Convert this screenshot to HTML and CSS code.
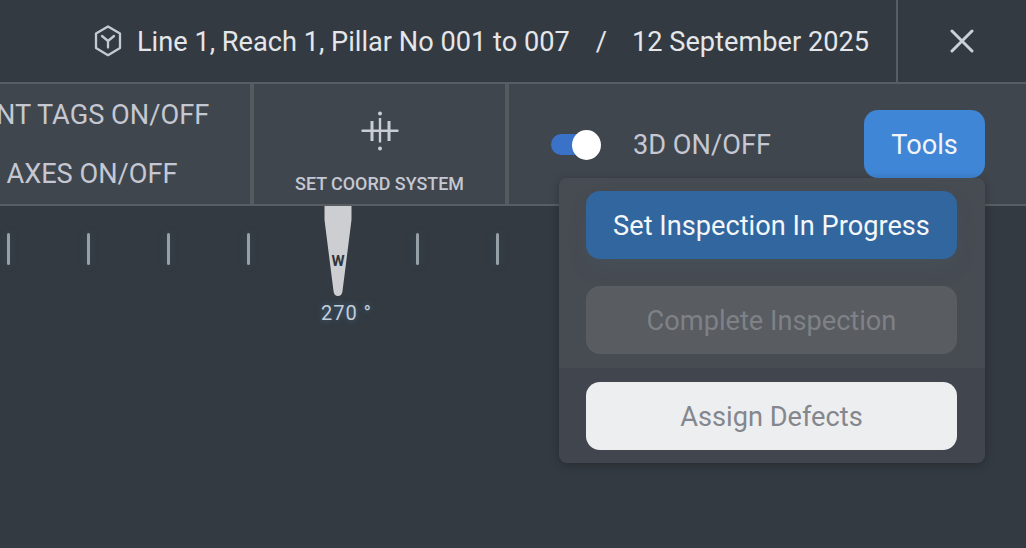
FILE: index.html
```html
<!DOCTYPE html>
<html>
<head>
  <title>Inspection Viewer</title>
  <link rel="stylesheet" href="styles.css">
</head>
<body>

  <div class="header">
    <svg class="cube" width="28" height="32" viewBox="0 0 28 32" fill="none" stroke="#c5c9d2" stroke-width="2.3" stroke-linejoin="round">
      <path d="M14 1.5 L26 8.6 V23 L14 30.2 L2 23 V8.6 Z"/>
      <path d="M8 11 L14 16 L20 11 M14 16 V22.5" stroke-linecap="round"/>
    </svg>
    <span class="title">Line 1, Reach 1, Pillar No 001 to 007</span>
    <span class="slash">/</span>
    <span class="title">12 September 2025</span>
    <div class="close">
      <svg width="24" height="24" viewBox="0 0 24 24" stroke="#ccd0d8" stroke-width="3" stroke-linecap="round">
        <path d="M2 2 L22 22 M22 2 L2 22"/>
      </svg>
    </div>
  </div>

  <div class="toolbar">
    <div class="cell cell-toggles">
      <div class="toggle-label tags-label">POINT TAGS ON/OFF</div>
      <div class="toggle-label">AXES ON/OFF</div>
    </div>
    <div class="cell cell-coord">
      <svg width="38" height="40" viewBox="0 0 38 40" fill="none" stroke="#c9cdd6">
        <path d="M1.5 19.8 H36.5" stroke-width="2.4" stroke-linecap="round"/>
        <path d="M11 10 V30 M28 10 V30" stroke-width="3"/>
        <path d="M19 7 V31.5" stroke-width="2.4"/>
        <circle cx="19" cy="2.4" r="2" fill="#c9cdd6" stroke="none"/>
        <circle cx="19" cy="37.4" r="2" fill="#c9cdd6" stroke="none"/>
      </svg>
      <div class="coord-label">SET COORD SYSTEM</div>
    </div>
    <div class="cell cell-tools">
      <div class="switch"><div class="knob"></div></div>
      <span class="toggle-label label-3d">3D ON/OFF</span>
      <button class="tools-btn">Tools</button>
    </div>
  </div>

  <div class="compass">
    <div class="tick"></div>
    <div class="tick"></div>
    <div class="tick"></div>
    <div class="tick"></div>
    <div class="needle">
      <svg width="28" height="90" viewBox="0 0 28 90">
        <path d="M0.5 0 H27.5 V14 L18.5 85 Q18 90 14 90 Q10 90 9.5 85 L0.5 14 Z" fill="#cdced1"/>
        <text x="14" y="59.5" text-anchor="middle" class="needle-letter">W</text>
      </svg>
      <div class="degrees">270 °</div>
    </div>
    <div class="tick"></div>
    <div class="tick"></div>
  </div>

  <div class="menu">
    <div class="menu-top">
      <button class="menu-btn primary">Set Inspection In Progress</button>
      <button class="menu-btn disabled">Complete Inspection</button>
    </div>
    <div class="menu-bottom">
      <button class="menu-btn light">Assign Defects</button>
    </div>
  </div>

</body>
</html>
```

FILE: styles.css
```css
html, body {
  margin: 0;
  height: 548px;
  overflow: hidden;
}
body {
  position: relative;
  font-family: Roboto, "Liberation Sans", sans-serif;
  background: #333a41;
}
.header {
  display: flex;
  align-items: center;
  justify-content: flex-end;
  height: 82px;
  border-bottom: 2px solid #595e63;
  color: #e4e6ea;
  font-size: 27.2px;
}
.cube {
  margin-right: 15px;
}
.title, .slash {
  padding-top: 2px;
}
.slash {
  margin: 0 25px 0 26px;
}
.close {
  display: flex;
  align-items: center;
  justify-content: center;
  box-sizing: border-box;
  width: 130px;
  height: 82px;
  margin-left: 27px;
  border-left: 2px solid #595e63;
}
.toolbar {
  display: flex;
  justify-content: flex-end;
  height: 120px;
  gap: 4px;
  background: #565b60;
  border-bottom: 2px solid #595e63;
}
.cell {
  flex: none;
  box-sizing: border-box;
  background: #40464e;
}
.cell-toggles {
  display: flex;
  flex-direction: column;
  align-items: center;
  justify-content: center;
  gap: 29px;
  width: 316px;
}
.toggle-label {
  color: #c5c8d2;
  font-size: 27.2px;
  line-height: 30px;
}
.tags-label {
  margin-right: 22px;
}
.label-3d {
  padding-top: 2px;
}
.cell-coord {
  display: flex;
  flex-direction: column;
  align-items: center;
  width: 251px;
  padding-top: 27px;
}
.coord-label {
  margin-top: 23px;
  color: #c5c8d2;
  font-size: 17.9px;
  font-weight: 500;
  line-height: 20px;
}
.cell-tools {
  display: flex;
  align-items: center;
  width: 517px;
  padding-left: 42px;
}
.switch {
  position: relative;
  width: 39px;
  height: 21px;
  margin-right: 43px;
  border-radius: 11px;
  background: #3a72c8;
}
.knob {
  position: absolute;
  top: -4px;
  right: -11px;
  width: 29px;
  height: 30px;
  border-radius: 50%;
  background: #fff;
}
.tools-btn {
  width: 121px;
  height: 68px;
  margin-left: auto;
  margin-right: 41px;
  padding: 2px 0 0;
  border: none;
  border-radius: 14px;
  background: #3f86d6;
  color: #f2f4f7;
  font-family: inherit;
  font-size: 27.2px;
}
.compass {
  display: flex;
  align-items: flex-start;
  padding-left: 7px;
}
.tick {
  flex: none;
  width: 3px;
  height: 32px;
  margin-top: 27px;
  margin-right: 77px;
  border-radius: 2px;
  background: #98a0a7;
  box-shadow: 0 0 8px rgba(60, 105, 150, 0.35);
  filter: blur(0.4px);
}
.needle {
  display: flex;
  flex-direction: column;
  align-items: center;
  flex: none;
  width: 80px;
  margin-left: -29px;
  margin-right: 38px;
}
.needle svg {
  display: block;
}
.needle-letter {
  fill: #30363c;
  font-size: 15px;
  font-weight: 700;
}
.degrees {
  margin-top: 5px;
  margin-left: 17px;
  color: #c4ced8;
  font-size: 20px;
  line-height: 24px;
  letter-spacing: 1px;
  white-space: nowrap;
  text-shadow: 0 0 6px rgba(70, 130, 190, 0.7);
}
.menu {
  position: absolute;
  top: 178px;
  left: 559px;
  width: 426px;
  border-radius: 8px;
  overflow: hidden;
  box-shadow: 0 2px 10px rgba(0, 0, 0, 0.25);
}
.menu-top {
  display: flex;
  flex-direction: column;
  gap: 27px;
  height: 190px;
  box-sizing: border-box;
  padding: 13px 27px 0;
  background: #474b52;
}
.menu-bottom {
  height: 95px;
  box-sizing: border-box;
  padding: 14px 27px 0;
  background: #41464e;
}
.menu-btn {
  display: block;
  width: 371px;
  height: 68px;
  padding: 2px 0 0;
  border: none;
  border-radius: 14px;
  font-family: inherit;
  font-size: 27.2px;
}
.primary {
  background: #31669f;
  color: #f4f6f8;
  box-shadow: 0 10px 20px rgba(60, 105, 130, 0.12);
}
.disabled {
  background: #595c61;
  color: #7e8287;
}
.light {
  background: #edeef0;
  color: #84878d;
}
```
